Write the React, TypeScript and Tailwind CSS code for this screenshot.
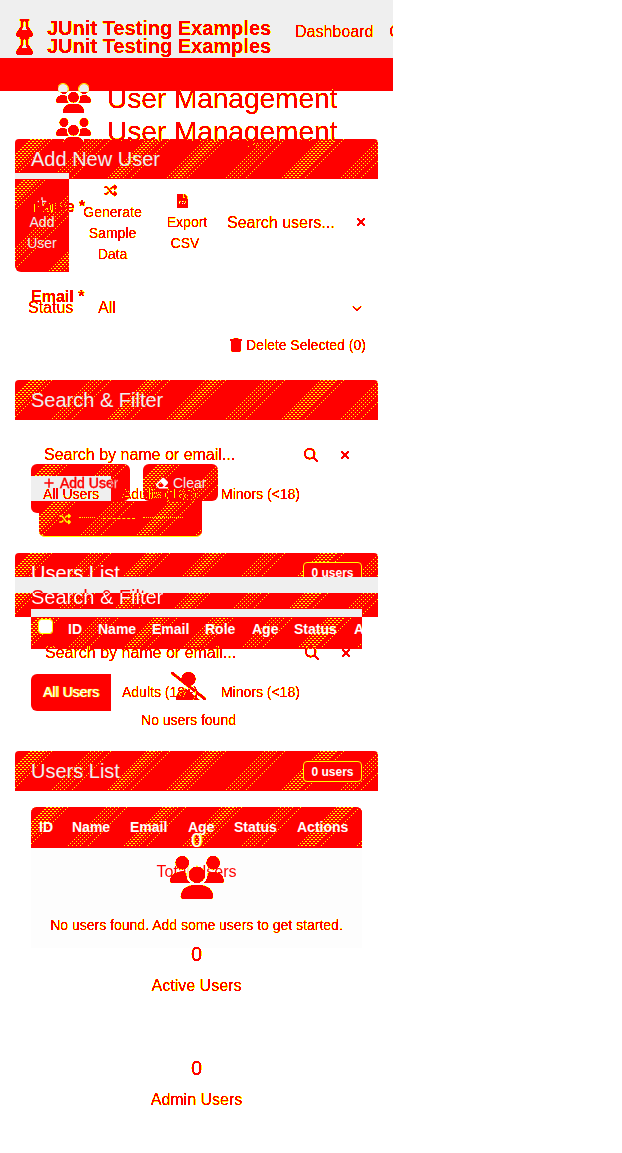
import React from "react";
import {
  FaFlask, FaUsers, FaPlus, FaShuffle, FaXmark, FaMagnifyingGlass,
  FaTrash, FaEraser, FaUserSlash, FaChevronDown,
} from "react-icons/fa6";
import { FaFileCsv } from "react-icons/fa";

const edge = "[filter:url(#edge)] text-black";
const hatch =
  "bg-[#f00] bg-[image:repeating-linear-gradient(135deg,#f00_0px,#f00_11px,transparent_11px,transparent_23px,#f00_23px,#f00_26px,transparent_26px,transparent_28px,#f00_28px,#f00_41px),repeating-linear-gradient(0deg,#f00_0px,#f00_1px,transparent_1px,transparent_2px),repeating-linear-gradient(135deg,#ff0_0px,#ff0_1px,#f00_1px,#f00_2.8px)]";

function Filters() {
  return (
    <defs>
      <filter id="edge" x="-5%" y="-10%" width="110%" height="120%" colorInterpolationFilters="sRGB">
        <feColorMatrix type="matrix" values="0 0 0 0 1  0 0 0 1 0  0 0 0 0 0  0 0 0 1 0" />
        <feComponentTransfer>
          <feFuncG type="discrete" tableValues="1 1 1 1 0 0 0 0 0 0" />
          <feFuncA type="discrete" tableValues="0 1 1 1 1 1 1 1 1 1" />
        </feComponentTransfer>
      </filter>
    </defs>
  );
}

function Brand() {
  return (
    <div className={`flex h-5 items-center pl-4 whitespace-nowrap ${edge}`}>
      <FaFlask className="h-[18px] w-[17px] shrink-0" preserveAspectRatio="none" />
      <span className="ml-[14px] text-xl leading-5 font-bold">JUnit Testing Examples</span>
    </div>
  );
}

function Title({ paleHeads = false }: { paleHeads?: boolean }) {
  return (
    <div className="relative flex h-8 pl-[56px]">
      <div className={`flex h-8 items-center ${edge}`}>
        <FaUsers className="h-[28px] w-[35px]" />
        <span className="ml-4 text-[28px] leading-8">User Management</span>
      </div>
      {paleHeads && (
        <div className="absolute top-0 left-[58px] flex h-[9px] gap-[11px] overflow-hidden pt-px">
          <span className="size-[10px] rounded-full bg-[#efefef] outline outline-[#ff0]" />
          <span className="size-[10px] rounded-full bg-[#efefef] outline outline-[#ff0]" />
        </div>
      )}
    </div>
  );
}

function SearchRow() {
  return (
    <div className={`flex h-5 items-center pl-[44px] ${edge}`}>
      <span className="w-[260px] text-base leading-5">Search by name or email...</span>
      <FaMagnifyingGlass className="size-[14px]" />
      <FaXmark className="ml-[21px] size-3" />
    </div>
  );
}

function Badge() {
  return (
    <span className="h-[21px] w-[59px] rounded border border-[#ff0] bg-[#f00] text-center text-xs leading-[20px] font-bold text-white">
      0 users
    </span>
  );
}

function Stat({ label }: { label: string }) {
  return (
    <div className={`flex flex-col items-center ${edge}`}>
      <span className="h-6 text-xl leading-6">0</span>
      <span className="mt-2 h-6 text-base leading-6">{label}</span>
    </div>
  );
}

/* Toolbar, filters and list of the compact page */
function CompactLayer() {
  return (
    <div className="col-start-1 row-start-1 flex flex-col">
      <div className="mt-[36px]"><Brand /></div>
      <div className="mt-[60px]"><Title /></div>
      <div className="mt-[25px] flex h-[99px] pl-[15px]">
        <div className={`flex w-[54px] flex-col items-center rounded-bl-md pt-[23px] text-sm leading-[21px] text-[#efefef] ${hatch}`}>
          <FaPlus className="h-[11px] w-3" />
          <span className="mt-[5px]">Add</span>
          <span>User</span>
        </div>
        <div className={`ml-[14px] flex w-[59px] flex-col items-center pt-[10px] text-sm leading-[21px] ${edge}`}>
          <FaShuffle className="mr-1 mt-px size-[13px]" />
          <span className="mt-[5px]">Generate</span>
          <span>Sample</span>
          <span>Data</span>
        </div>
        <div className={`ml-[24px] flex w-[42px] flex-col items-center pt-[21px] text-sm leading-[21px] ${edge}`}>
          <FaFileCsv className="-ml-[10px] h-[14px] w-[11px]" />
          <span className="mt-[4px]">Export</span>
          <span className="-ml-1">CSV</span>
        </div>
        <div className={`mt-[40px] ml-[19px] flex h-5 items-center ${edge}`}>
          <span className="w-[127px] text-base leading-5">Search users...</span>
          <FaXmark className="mb-[3px] ml-px size-3" />
        </div>
      </div>
      <div className={`mt-[26px] flex h-5 items-center pl-7 text-base ${edge}`}>
        <span className="w-[70px]">Status</span>
        <span className="w-[254px]">All</span>
        <FaChevronDown className="size-[10px]" />
      </div>
      <div className={`mt-[17px] flex h-5 items-center pl-[230px] text-sm ${edge}`}>
        <FaTrash className="h-[14px] w-3" />
        <span className="ml-1">Delete Selected (0)</span>
      </div>
      <div className={`mt-[25px] ml-[15px] flex h-10 w-[363px] items-center rounded-t pl-4 text-xl text-[#efefef] ${hatch}`}>
        Search &amp; Filter
      </div>
      <div className="mt-[25px]"><SearchRow /></div>
      <div className={`mt-[88px] ml-[15px] flex h-10 w-[363px] justify-between rounded-t pt-[9px] pr-4 pl-4 text-xl leading-[22px] text-white ${hatch}`}>
        <span>Users List</span>
        <Badge />
      </div>
      <div className={`mt-4 ml-[31px] flex h-10 w-[331px] items-center overflow-hidden rounded-t-md border-b border-[#f00] text-sm font-bold whitespace-nowrap text-white ${hatch}`}>
        <span className="-mt-1 ml-2 size-[13px] shrink-0 rounded-[2px] bg-white outline outline-[#ff0]" />
        <span className="ml-4 w-[30px] shrink-0">ID</span>
        <span className="w-[54px] shrink-0">Name</span>
        <span className="w-[53px] shrink-0">Email</span>
        <span className="w-[47px] shrink-0">Role</span>
        <span className="w-[42px] shrink-0">Age</span>
        <span className="w-[60px] shrink-0">Status</span>
        <span>Actions</span>
      </div>
      <div className={`mt-[23px] flex flex-col items-center pr-4 text-sm ${edge}`}>
        <FaUserSlash className="h-[28px] w-[35px]" />
        <span className="mt-[10px] leading-5">No users found</span>
      </div>
    </div>
  );
}

/* Form, filters and list of the full page */
function FormLayer() {
  return (
    <div className="col-start-1 row-start-1 flex flex-col">
      <div className="mt-[18px] flex h-5 items-start">
        <div className="w-[295px] shrink-0"><Brand /></div>
        <div className={`flex gap-[16px] pt-[4px] text-base leading-5 ${edge}`}>
          <span>Dashboard</span>
          <span>Calculator</span>
        </div>
      </div>
      <div className="mt-[45px]"><Title paleHeads /></div>
      <div className={`mt-[24px] ml-[15px] h-10 w-[363px] rounded-t ${hatch}`}>
        <div className="h-full bg-[linear-gradient(#efefef,#efefef),linear-gradient(#efefef,#efefef)] bg-[length:54px_6px,20px_5px] bg-[position:0px_34px,49px_0px] bg-no-repeat pl-4 text-xl leading-10 text-[#efefef]">
          Add New User
        </div>
      </div>
      <div className={`mt-[18px] ml-[31px] h-5 w-fit text-base leading-5 font-bold ${edge}`}>Name *</div>
      <div className={`mt-[70px] ml-[31px] h-5 w-fit text-base leading-5 font-bold ${edge}`}>Email *</div>
      <div className="mt-[157px] flex h-[37px] pl-[31px]">
        <div className={`w-[99px] rounded-t-md rounded-br-md ${hatch}`}>
          <div className="flex h-full items-center bg-[linear-gradient(#efefef,#efefef)] bg-[length:80px_25px] bg-[position:0px_12px] bg-no-repeat pl-3 text-sm">
            <span className="flex items-center bg-[linear-gradient(90deg,#f00_68px,#efefef_68px)] bg-clip-text text-transparent [-webkit-text-stroke:0.3px_#f00]">
              <FaPlus className="mr-[5px] size-3 text-[#f00]" />
              Add User
            </span>
          </div>
        </div>
        <div className={`ml-[13px] flex w-[75px] items-center gap-1 rounded-md pl-3 text-sm text-[#efefef] ${hatch}`}>
          <FaEraser className="size-[14px] text-white" />
          Clear
        </div>
      </div>
      <div className="flex h-9 pl-[31px]">
        <div className="h-3 w-2 rounded-bl-md bg-[#f00]" />
        <div className={`flex w-[163px] items-center gap-2 rounded-b-md border-b border-[#ff0] pl-5 text-sm text-[#ff0] ${hatch}`}>
          <FaShuffle className="size-3 text-[#ff0]" />
          <span className="h-[3px] w-4 border-t border-dotted border-[#ff0]" />
          <span className="h-px w-8 border-t border-dashed border-[#ff0]" />
          <span className="h-[3px] w-10 border-t border-dotted border-[#ff0]" />
        </div>
      </div>
      <div className={`mt-10 ml-[15px] h-10 w-[363px] ${hatch}`}>
        <div className="h-full bg-[linear-gradient(#efefef,#efefef),linear-gradient(#efefef,#efefef)] bg-[length:363px_16px,331px_9px] bg-[position:0px_0px,16px_32px] bg-no-repeat pl-4">
          <span className="block w-fit bg-[linear-gradient(#f00_16px,#fff_16px)] bg-clip-text text-xl leading-10 text-transparent">
            Search &amp; Filter
          </span>
        </div>
      </div>
      <div className="mt-[26px] pl-px"><SearchRow /></div>
      <div className="mt-[11px] flex h-[37px] pl-[31px] text-sm leading-[37px]">
        <span className="w-20 rounded-l-md bg-[#f00] pl-3 whitespace-nowrap text-white [text-shadow:0_0_1px_#ff0,1px_0_0_#ff0]">All Users</span>
        <span className={`ml-[11px] ${edge}`}>Adults (18+)</span>
        <span className={`ml-[23px] ${edge}`}>Minors (&lt;18)</span>
      </div>
      <div className={`mt-10 ml-[15px] flex h-10 w-[363px] items-center justify-between rounded-t px-4 text-xl text-[#efefef] ${hatch}`}>
        <span>Users List</span>
        <Badge />
      </div>
      <div className={`mt-4 ml-[31px] flex h-[41px] w-[331px] items-center rounded-t-md border-b border-[#f00] pl-2 text-sm font-bold text-white ${hatch}`}>
        <span className="w-[33px]">ID</span>
        <span className="w-[58px]">Name</span>
        <span className="w-[58px]">Email</span>
        <span className="w-[46px]">Age</span>
        <span className="w-[63px]">Status</span>
        <span>Actions</span>
      </div>
      <div className="ml-[31px] flex h-[100px] w-[331px] flex-col items-center bg-[#fdfdfd] pt-2">
        <FaUsers className={`h-[43px] w-[54px] ${edge}`} />
        <span className={`mt-4 text-sm leading-5 whitespace-nowrap ${edge}`}>No users found. Add some users to get started.</span>
      </div>
    </div>
  );
}

/* Labels that stay above both pages */
function LabelLayer() {
  return (
    <div className="col-start-1 row-start-1 flex flex-col">
      <div className={`mt-[484px] flex h-5 pl-[43px] text-sm leading-5 ${edge}`}>
        <span className="w-[79px]">All Users</span>
        <span className="w-[99px]">Adults (18+)</span>
        <span>Minors (&lt;18)</span>
      </div>
      <div className="mt-[324px] flex flex-col items-center">
        <span className="h-6 text-xl leading-6 text-white [text-shadow:1px_0_0_#fd0]">0</span>
        <span className="mt-2 h-6 bg-[linear-gradient(90deg,#f00_32px,#ff9_32px,#ff9_46px,#f00_46px)] bg-clip-text text-base leading-6 text-transparent">
          Total Users
        </span>
      </div>
      <div className="mt-[58px]"><Stat label="Active Users" /></div>
      <div className="mt-[58px]"><Stat label="Admin Users" /></div>
    </div>
  );
}

export default function App() {
  return (
    <div className="h-[1153px] w-full overflow-hidden bg-white font-['Liberation_Sans',Arial,sans-serif]">
      <svg className="absolute size-0" aria-hidden="true"><Filters /></svg>
      <div className="isolate grid h-full w-[393px] grid-cols-[393px] overflow-hidden">
        <div className="col-start-1 row-start-1 flex flex-col">
          <div className="h-[58px] bg-[#efefef]" />
          <div className="h-[33px] bg-[#f00]" />
        </div>
        <CompactLayer />
        <FormLayer />
        <LabelLayer />
      </div>
    </div>
  );
}
